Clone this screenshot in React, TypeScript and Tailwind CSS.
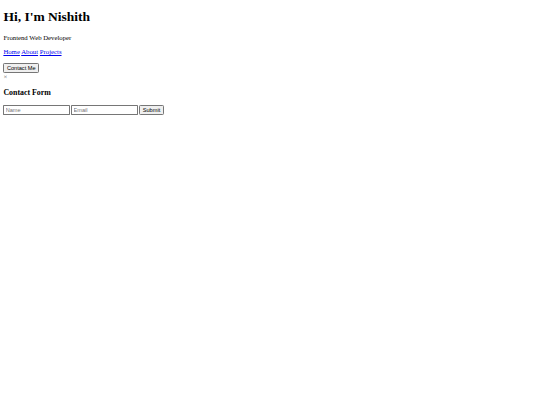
import React from 'react';

// The reference is a 1280px-wide page shown at 540px, so the whole page is zoomed down.
export default function App() {
  return (
    <div className="[zoom:0.421875] w-[1280px] min-h-[960px] bg-white text-black font-['Liberation_Serif','Times_New_Roman',serif] text-[16px] leading-[normal]">
      <div className="p-[8px]">
        <header>
          <h1 className="mt-[13.44px] mb-[21.44px] text-[32px] font-bold leading-[normal]">Hi, I'm Nishith</h1>
          <p className="my-[16px]">Frontend Web Developer</p>
        </header>

        <nav className="mt-[17px] mb-[18px]">
          <a href="#home" className="text-[#0000ee] underline">Home</a>{' '}
          <a href="#about" className="text-[#0000ee] underline">About</a>{' '}
          <a href="#projects" className="text-[#0000ee] underline">Projects</a>
        </nav>

        <button className="bg-[#efefef] border border-[#767676] rounded-[3px] px-[6px] py-[2px] text-[13.33px] leading-[normal] font-['Liberation_Sans',Arial,sans-serif] text-black">
          Contact Me
        </button>

        <div>
          <span className="text-[#555]">&times;</span>
          <h3 className="mt-[21px] mb-[19px] text-[18.72px] font-bold leading-[normal]">Contact Form</h3>
          <form>
            <input
              type="text"
              placeholder="Name"
              className="w-[157px] border border-[#767676] rounded-[2px] px-[3px] py-[2px] text-[13.33px] leading-[normal] font-['Liberation_Sans',Arial,sans-serif] placeholder:text-[#757575]"
            />{' '}
            <input
              type="email"
              placeholder="Email"
              className="w-[157px] border border-[#767676] rounded-[2px] px-[3px] py-[2px] text-[13.33px] leading-[normal] font-['Liberation_Sans',Arial,sans-serif] placeholder:text-[#757575]"
            />{' '}
            <button
              type="submit"
              className="bg-[#efefef] border border-[#767676] rounded-[3px] px-[6px] py-[2px] text-[13.33px] leading-[normal] font-['Liberation_Sans',Arial,sans-serif] text-black"
            >
              Submit
            </button>
          </form>
        </div>
      </div>
    </div>
  );
}
